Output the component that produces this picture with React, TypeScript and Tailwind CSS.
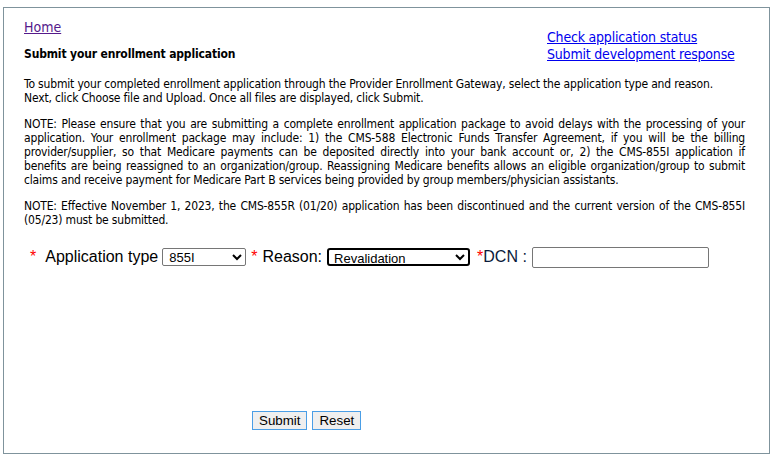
import { useState } from 'react';

const notes = [
    [
        'NOTE: Please ensure that you are submitting a complete enrollment application package to avoid delays with the processing of your',
        'application. Your enrollment package may include: 1) the CMS-588 Electronic Funds Transfer Agreement, if you will be the billing',
        'provider/supplier, so that Medicare payments can be deposited directly into your bank account or, 2) the CMS-855I application if',
        'benefits are being reassigned to an organization/group. Reassigning Medicare benefits allows an eligible organization/group to submit',
        'claims and receive payment for Medicare Part B services being provided by group members/physician assistants.',
    ],
    [
        'NOTE: Effective November 1, 2023, the CMS-855R (01/20) application has been discontinued and the current version of the CMS-855I',
        '(05/23) must be submitted.',
    ],
];

export default function App() {
    const [appType, setAppType] = useState('855I');
    const [reason, setReason] = useState('Revalidation');
    const [dcn, setDcn] = useState('');

    return (
        <div className="bg-white w-[776px] h-[461px] pt-[7px] pl-[3px]" style={{ fontFamily: 'Tahoma, "DejaVu Sans Condensed", "DejaVu Sans", sans-serif' }}>
            <div className="w-[767px] h-[447px] border border-[#7f939c] pl-[20px] pr-[24px] pt-[7px]">
                {/* Header */}
                <div className="flex justify-between">
                    <div>
                        <a href="#" className="text-[14px] leading-[17px] text-[#551a8b] underline">Home</a>
                        <h1 className="mt-[8px] text-[12px] leading-[15px] font-bold text-black tracking-[-0.15px]">Submit your enrollment application</h1>
                    </div>
                    <div className="flex flex-col w-[198px] pt-[14px]">
                        <a href="#" className="text-[14px] leading-[17px] text-[#0000ee] underline tracking-[-0.2px]">Check application status</a>
                        <a href="#" className="text-[14px] leading-[17px] text-[#0000ee] underline tracking-[-0.2px]">Submit development response</a>
                    </div>
                </div>

                {/* Instructions */}
                <div className="mt-[14px] text-[12px] leading-[14px] tracking-[-0.17px] text-black space-y-[12px] whitespace-nowrap">
                    <div>
                        <div>To submit your completed enrollment application through the Provider Enrollment Gateway, select the application type and reason.</div>
                        <div>Next, click Choose file and Upload. Once all files are displayed, click Submit.</div>
                    </div>
                    {notes.map((lines, i) => (
                        <div key={i}>
                            {lines.map((line, j) => (
                                <div
                                    key={j}
                                    className={j < lines.length - 1 ? 'whitespace-normal text-justify [text-align-last:justify]' : ''}
                                >
                                    {line}
                                </div>
                            ))}
                        </div>
                    ))}
                </div>

                {/* Form row */}
                <div className="mt-[18px] ml-[6px] flex items-center text-[16px] text-black" style={{ fontFamily: 'Arial, "Liberation Sans", sans-serif' }}>
                    <span className="text-[#ff0000] mr-[9px]">*</span>
                    <span>Application type</span>
                    <select
                        value={appType}
                        onChange={(e) => setAppType(e.target.value)}
                        className="ml-[4px] w-[84px] h-[18px] border border-[#767676] rounded-[2px] text-[13px] leading-none py-0 pl-[2px] bg-white"
                    >
                        <option>855I</option>
                        <option>855B</option>
                        <option>588</option>
                    </select>
                    <span className="text-[#ff0000] ml-[5px] mr-[5px]">*</span>
                    <span>Reason:</span>
                    <select
                        value={reason}
                        onChange={(e) => setReason(e.target.value)}
                        className="ml-[5px] w-[143px] h-[18px] border-2 border-black rounded-[3px] text-[13px] leading-none py-0 pl-[1px] bg-white"
                    >
                        <option>Revalidation</option>
                        <option>Initial Enrollment</option>
                        <option>Change of Information</option>
                    </select>
                    <span className="text-[#ff0000] ml-[7px]">*</span>
                    <span className="text-[#0a1a3a]">DCN :</span>
                    <input
                        value={dcn}
                        onChange={(e) => setDcn(e.target.value)}
                        className="ml-[5px] w-[177px] h-[21px] border border-[#767676] rounded-[2px] bg-white"
                    />
                </div>

                {/* Buttons */}
                <div className="mt-[142px] ml-[228px] flex gap-[5px]" style={{ fontFamily: 'Arial, "Liberation Sans", sans-serif' }}>
                    <button className="h-[19px] px-[6px] text-[13.33px] leading-[15px] bg-[#efefef] border border-[#4a9ee6] text-black">Submit</button>
                    <button className="h-[19px] px-[6px] text-[13.33px] leading-[15px] bg-[#efefef] border border-[#4a9ee6] text-black">Reset</button>
                </div>
            </div>
        </div>
    );
}
